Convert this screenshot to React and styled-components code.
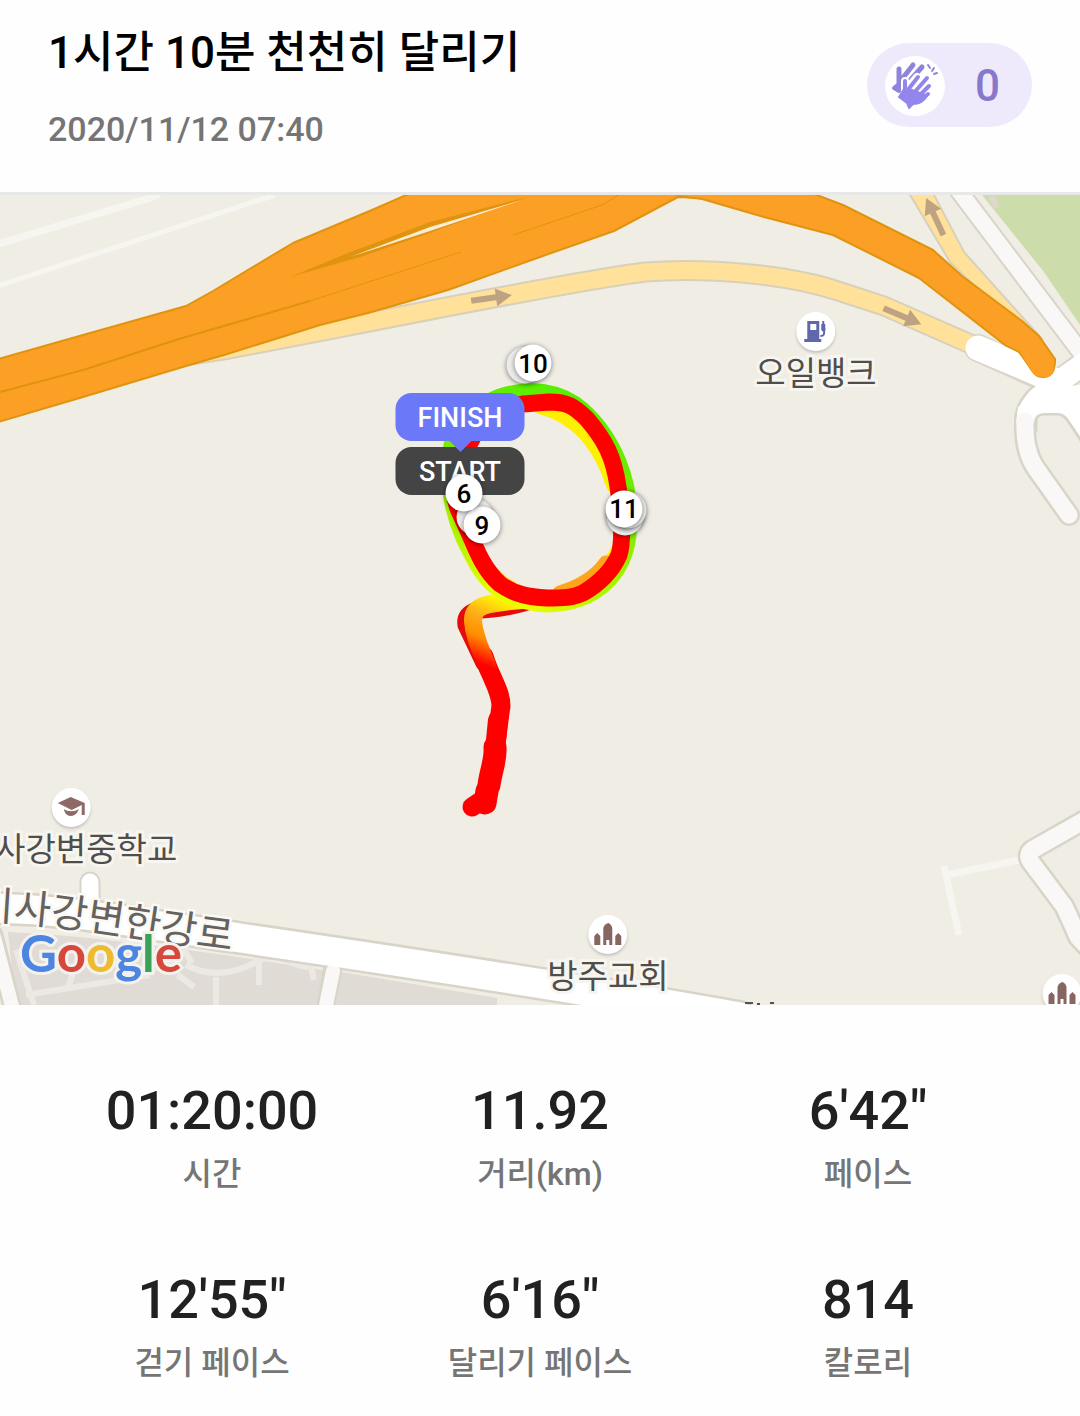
import React from 'react';
import styled, { createGlobalStyle, css } from 'styled-components';

const GlobalStyle = createGlobalStyle`
  * {
    box-sizing: border-box;
  }

  body {
    margin: 0;
    background: #fefefe;
    font-family: Roboto, 'Noto Sans CJK KR', sans-serif;
    font-weight: 500;
  }
`;

const Page = styled.main`
  width: 100%;
  overflow: hidden;
`;

const Header = styled.header`
  display: flex;
  justify-content: space-between;
  align-items: flex-start;
  padding: 24px 48px 42px;
  border-bottom: 3px solid #e8e8e8;
`;

const Title = styled.h1`
  margin: 0;
  font-size: 44px;
  line-height: 58px;
  font-weight: 500;
  color: #000;
`;

const DateText = styled.time`
  display: block;
  margin-top: 26px;
  font-size: 34px;
  line-height: 42px;
  color: #757575;
`;

const ClapButton = styled.button`
  display: flex;
  align-items: center;
  gap: 30px;
  height: 84px;
  margin-top: 19px;
  padding: 2px 32px 0 18px;
  border: 0;
  border-radius: 42px;
  background: #eeeafc;
  color: #8878cc;
  font: inherit;
  font-size: 44px;
  cursor: pointer;
`;

const ClapCircle = styled.span`
  display: flex;
  width: 60px;
  height: 60px;
  border-radius: 50%;
  background: #fff;
`;

const MapBox = styled.section`
  position: relative;
  width: 100%;
  aspect-ratio: 4 / 3;
  overflow: hidden;
  background: #f0ede5;
`;

const MapCanvas = styled.svg`
  display: block;
  width: 100%;
  height: 100%;
`;

const pinned = css`
  position: absolute;
  transform: translate(-50%, -50%);
`;

const Place = styled.div`
  position: absolute;
  transform: translate(-50%, -20px);
  display: flex;
  flex-direction: column;
  align-items: center;
  font-size: 33px;
  line-height: 46px;
  font-weight: 400;
  color: #504d4a;
  white-space: nowrap;
  -webkit-text-stroke: 6px #f7f5f0;
  paint-order: stroke fill;
`;

const PlaceIcon = styled.span`
  display: flex;
  width: 39px;
  height: 39px;
  border-radius: 50%;
  background: #fff;
  box-shadow: 0 2px 3px rgba(0, 0, 0, 0.18);
`;

const KmMarker = styled.span`
  ${pinned}
  display: flex;
  align-items: center;
  justify-content: center;
  width: 37px;
  height: 37px;
  border-radius: 50%;
  background: ${(p) => (p.$behind ? '#ececec' : '#fff')};
  box-shadow: 0 1px 5px rgba(0, 0, 0, 0.5);
  font-size: 26px;
  color: #000;
`;

const Flag = styled.span`
  ${pinned}
  width: 129px;
  height: 48px;
  border-radius: 16px;
  background: ${(p) => p.$color};
  font-size: 27px;
  line-height: 51px;
  text-align: center;
  color: #fff;

  &::after {
    content: '';
    position: absolute;
    top: 47px;
    left: 50%;
    margin-left: -12px;
    border: 12px solid transparent;
    border-bottom: 0;
    border-top-color: ${(p) => p.$color};
  }
`;

const GoogleLogo = styled.a`
  position: absolute;
  left: 20px;
  bottom: 20px;
  font-family: Lato, sans-serif;
  font-size: 51px;
  line-height: 64px;
  font-weight: 700;
  text-decoration: none;
  -webkit-text-stroke: 6px #f4f2ee;
  paint-order: stroke fill;
`;

const Letter = styled.span`
  color: ${(p) => p.$color};
`;

const Stats = styled.dl`
  display: grid;
  grid-template-columns: repeat(3, 1fr);
  row-gap: 63px;
  margin: 0;
  padding: 74px 48px 32px;
`;

const Stat = styled.div`
  display: flex;
  flex-direction: column-reverse;
  align-items: center;
`;

const StatLabel = styled.dt`
  font-size: 32px;
  line-height: 62px;
  color: #757575;
`;

const StatValue = styled.dd`
  margin: 0;
  font-size: 54px;
  line-height: 64px;
  color: #212121;
`;

const stats = [
  { label: '시간', value: '01:20:00' },
  { label: '거리(km)', value: '11.92' },
  { label: '페이스', value: '6\'42"' },
  { label: '걷기 페이스', value: '12\'55"' },
  { label: '달리기 페이스', value: '6\'16"' },
  { label: '칼로리', value: '814' },
];

const googleLetters = [
  ['G', '#4c86e0'],
  ['o', '#d6473c'],
  ['o', '#eebb2e'],
  ['g', '#4c86e0'],
  ['l', '#3aa257'],
  ['e', '#d6473c'],
];

// the map is drawn on a 1080 x 810 canvas
const at = (x, y) => ({ left: `${(x / 1080) * 100}%`, top: `${(y / 810) * 100}%` });

const places = [
  { name: '오일뱅크', x: 816, y: 137, icon: FuelIcon },
  { name: '미사강변중학교', x: 71, y: 613, icon: SchoolIcon },
  { name: '방주교회', x: 608, y: 740, icon: ChurchIcon },
  { x: 1062, y: 799, icon: ChurchIcon },
];

const markers = [
  { x: 525, y: 170 },
  { x: 533, y: 168, km: 10 },
  { x: 625, y: 322 },
  { x: 628, y: 315 },
  { x: 624, y: 314, km: 11 },
  { x: 475, y: 322 },
  { x: 482, y: 330, km: 9 },
  { x: 464, y: 298, km: 6 },
];

const arrows = [
  { x: 491, y: 103, angle: -8 },
  { x: 902, y: 121, angle: 23 },
  { x: 935, y: 22, angle: -115 },
];

function FuelIcon() {
  return (
    <svg viewBox="0 0 39 39" fill="#5f68ab">
      <path fillRule="evenodd" d="M11 9h12v18h2v3H8v-3h3zM14 12v6h6v-6z" />
      <path d="M27 9v4M27 12v5M24 24c4 0 4-1 4-8" fill="none" stroke="#5f68ab" strokeWidth="2" />
      <path d="M25 12h4v6l-2 2-2-2z" />
    </svg>
  );
}

function SchoolIcon() {
  return (
    <svg viewBox="0 0 39 39" fill="#8d6a65">
      <path d="M6 15 19 9l14 6v12h-3V17l-10 5z" />
      <path d="M12 21c4 3 11 3 15 0-1 4-4 7-8 7s-6-3-7-7z" />
    </svg>
  );
}

function ChurchIcon() {
  return (
    <svg viewBox="0 0 39 39" fill="#876560">
      <path d="M6 30v-9l3-3 3 3v9zM27 30v-9l3-3 3 3v9zM15 30V13q1-4 5-5 3 1 4 5v17h-3v-5h-3v5z" />
    </svg>
  );
}

function ClapIcon() {
  return (
    <svg viewBox="0 0 60 60" fill="none" strokeLinecap="round" strokeLinejoin="round">
      <g stroke="#8f84da">
        <path d="M14 13v18M28 9 17 23M37 11 22 28" strokeWidth="5" />
        <path d="M9 32l5-4v7z" strokeWidth="4" fill="#8f84da" />
        <path d="M43 9l2 3M49 12l-2 3M52 17l-3 1" strokeWidth="2" />
      </g>
      <g stroke="#fff">
        <path d="M20 25v15M32 21 21 34M42 22 28 37M44 29 31 42" strokeWidth="8" />
      </g>
      <g stroke="#9286ec" fill="#9286ec">
        <path d="M20 25v15M33 21 22 35M42 22 28 38M44 30 31 43M43 38 33 46" strokeWidth="4" />
        <path d="M19 33 14 41 22 47 24 52 28 48C34 48 39 45 42 40L35 37 24 33z" strokeWidth="2" />
      </g>
    </svg>
  );
}

function RoadMap() {
  return (
    <MapCanvas viewBox="0 0 1080 810" preserveAspectRatio="xMidYMid slice" aria-hidden="true">
      <defs>
        <linearGradient id="tail" gradientUnits="userSpaceOnUse" x1="510" y1="405" x2="484" y2="470">
          <stop offset="0" stopColor="#ff0" />
          <stop offset="0.35" stopColor="#ffae1a" />
          <stop offset="0.65" stopColor="#ff8c00" />
          <stop offset="1" stopColor="#f00" />
        </linearGradient>
        <linearGradient id="pace" gradientUnits="userSpaceOnUse" x1="590" y1="190" x2="500" y2="418">
          <stop offset="0" stopColor="#52f000" />
          <stop offset="0.45" stopColor="#7dea00" />
          <stop offset="0.8" stopColor="#b4f500" />
          <stop offset="1" stopColor="#ff0" />
        </linearGradient>
        <path id="riverRoad" d="M-24 724C40 727 90 735 130 741S200 752 280 761" />
      </defs>

      {/* side streets */}
      <g fill="none" stroke="#f6f5f0">
        <path d="M-5 50 160 0" strokeWidth="7" />
        <path d="M-5 92 275 0" strokeWidth="5" />
        <path d="M944 671l15 69M946 680l74-15" strokeWidth="7" />
      </g>

      {/* park */}
      <path d="M982 0 1019 46 1044 77 1080 130V0z" fill="#ccdcaa" />
      <path d="M988 2l6 12 5-2-4-12z" fill="#dcd8cc" />

      {/* city blocks */}
      <g fill="#e0dbd5">
        <path d="M8 737C80 740 150 750 225 760L323 775 316 810H16z" />
        <path d="M341 777 497 803V810H333z" />
      </g>
      <g fill="none" stroke="#ece9e4" strokeWidth="6">
        <path d="M16 755 34 810M26 800 150 780M82 754 68 792M150 776 185 757 192 768M178 780 194 792M186 770C214 785 240 776 258 766S290 770 308 772M216 782V810M259 768V790M308 760 314 785" />
      </g>

      {/* local roads: casing then fill */}
      <g fill="none" strokeLinecap="round" strokeLinejoin="round">
        <g stroke="#d8d4c8">
          <path d="M90 687V720" strokeWidth="21" />
          <path d="M-6 740 13 815M333 772 324 820" strokeWidth="19" />
          <path d="M-20 713C60 713 110 724 240 743S560 790 740 822" strokeWidth="34" />
          <path d="M1090 622 1032 655Q1026 660 1031 667L1064 711Q1072 728 1078 742L1095 760" strokeWidth="22" />
          <path d="M953-12 1095 176" strokeWidth="20" />
          <path d="M978 153 1056 188" strokeWidth="28" />
          <path d="M1056 188Q1024 205 1025 228" strokeWidth="22" />
          <path d="M1054 190 1110 150M1052 192 1100 260" strokeWidth="26" />
        </g>
        <g stroke="#fff">
          <path d="M90 687V724" strokeWidth="17" />
          <path d="M-6 742 13 815M333 776 324 820" strokeWidth="14" stroke="#faf8f6" />
          <path d="M-20 713C60 713 110 724 240 743S560 790 740 822" strokeWidth="29" />
          <g stroke="#faf8f6">
            <path d="M1090 622 1032 655Q1026 660 1031 667L1064 711Q1072 728 1078 742L1095 760" strokeWidth="17" />
            <path d="M953-12 1095 176" strokeWidth="16" />
          </g>
          <path d="M1056 188Q1024 205 1025 228" strokeWidth="17" />
          <path d="M1054 190 1110 150M1052 192 1100 260" strokeWidth="22" />
        </g>
      </g>
      <path d="M1035 226Q1036 219 1045 219H1058Q1063 219 1068 226L1090 260V290H1050L1036 250z" fill="#f0ede5" />
      <g fill="none" strokeLinecap="round">
        <path d="M1036 236V226Q1036 219 1045 219H1058Q1063 219 1068 226L1084 250" stroke="#d8d4c8" strokeWidth="3" />
        <path d="M1025 228Q1024 255 1035 272L1069 320" stroke="#d8d4c8" strokeWidth="22" />
      </g>
      <path d="M1040 193 1018 212 1016 228H1034Q1034 218 1045 218H1058Q1065 218 1070 226L1080 240V190z" fill="#fff" />
      <path d="M1025 226Q1024 255 1035 272L1069 320" fill="none" stroke="#faf8f6" strokeWidth="17" strokeLinecap="round" />

      {/* ramps */}
      <path
        d="M186 161 224 155 334 134C440 113 590 84 645 77 710 72 790 80 838 96L884 111 975 151"
        fill="none"
        stroke="#d9d0bb"
        strokeWidth="21"
      />
      <path
        d="M186 161 224 155 334 134C440 113 590 84 645 77 710 72 790 80 838 96L884 111 975 151"
        fill="none"
        stroke="#ffe199"
        strokeWidth="17"
      />
      <path d="M909-2 950 67 1010 125 1043 145 964 57 933-2z" fill="#ffe199" stroke="#d9d0bb" strokeWidth="2" />
      <path d="M978 153 1056 186" stroke="#fff" strokeWidth="25" strokeLinecap="round" />

      {/* expressway */}
      <g fill="#fc9f25" stroke="#e0930f" strokeWidth="2" strokeLinejoin="round">
        <path d="M-5 165 83 140 186 111 213 96 293 48 372 15 413-3H720L702 3 678 2 614 36 540 62 448 95 368 118 320 130 224 160 186 171 83 202-5 228z" />
        <path d="M670-10 678 1 702 4 764 22 833 40 919 83 1005 150 1019 157C1030 170 1032 182 1043 182S1055 172 1055 164L1039 141 1022 126 962 81 933 55 843 10 809-3V-10z" />
      </g>
      <path d="M682-4 702 2 764 20 800 20 760-4z" fill="#fc9f25" />
      <path d="M1005 149 1019 156C1030 170 1030 182 1043 182S1054 174 1053 166L1030 140z" fill="#fc9f25" />
      <path d="M290 82 348 58 430 27 528 2 427 39 360 62z" fill="#e0930f" />
      <path d="M350 62 430 32 522 5 427 37z" fill="#f8ecd3" />
      <path d="M0 197 83 175 179 144 310 106 461 57" fill="none" stroke="#e0930f" strokeWidth="1" />
      <path d="M0 197 83 175 179 144 310 106" fill="none" stroke="#e0930f" strokeWidth="2" />
      <path d="M513 40 540 31 602 10 622-2" fill="none" stroke="#e0930f" strokeWidth="1" />

      {arrows.map((a) => (
        <path
          key={a.x}
          d="M-20-3H5V-9L21 0 5 9V3H-20z"
          transform={`translate(${a.x} ${a.y}) rotate(${a.angle})`}
          fill="#bda384"
        />
      ))}

      <g fill="none" strokeLinecap="round" strokeLinejoin="round">
        {/* run to the track and back */}
        <path d="M540 403Q505 415 478 415 464 418 466 430L484 468" stroke="#e60a0a" strokeWidth="17" />
        <path d="M484 461C490 482 501 495 501 511 499 525 498 532 497 542" stroke="#f00" strokeWidth="19" />
        <path d="M498 525 496 545 493 570" stroke="#f00" strokeWidth="20" />
        <path d="M495 552C496 565 491 575 489 590" stroke="#f00" strokeWidth="23" />
        <path d="M488 588 487 602 472 612" stroke="#f00" strokeWidth="19" />
        <path d="M487 596 485 608" stroke="#f00" strokeWidth="23" />
        <path d="M530 404C500 408 472 406 473 426 474 442 482 457 488 474" stroke="url(#tail)" strokeWidth="18" />

        {/* laps */}
        <path
          d="M452 250C446 280 450 310 464 343 480 375 490 404 545 409 600 408 624 375 628 340 634 285 610 240 582 215 560 196 530 192 500 202 475 212 458 230 452 250z"
          stroke="url(#pace)"
          strokeWidth="17"
        />
        <path
          d="M540 211C575 220 600 245 614 290M622 345C618 365 600 385 565 398M540 404C510 400 485 380 472 348"
          stroke="#ffef00"
          strokeWidth="16"
        />
        <path d="M606 368Q592 388 560 398" stroke="#ffa51c" strokeWidth="15" />
        <path
          d="M473 242C458 270 448 295 460 318L470 340C477 357 485 376 500 389 515 400 530 402 547 403 562 403 573 403 583 398 600 388 612 376 619 360 624 345 621 310 618 292 614 262 605 245 587 224 574 211 567 207 549 207L523 209 500 214"
          stroke="#f00"
          strokeWidth="17"
        />
      </g>

      <text fontSize="40" fontWeight="400" fill="#66625e" stroke="#faf9f6" strokeWidth="5" paintOrder="stroke">
        <textPath href="#riverRoad">미사강변한강로</textPath>
      </text>
      <path d="M745 808h8M757 809h3M770 808h4" stroke="#55524f" strokeWidth="2" />
    </MapCanvas>
  );
}

function App() {
  return (
    <>
      <GlobalStyle />
      <Page>
        <Header>
          <div>
            <Title>1시간 10분 천천히 달리기</Title>
            <DateText dateTime="2020-11-12T07:40">2020/11/12 07:40</DateText>
          </div>
          <ClapButton type="button">
            <ClapCircle>
              <ClapIcon />
            </ClapCircle>
            0
          </ClapButton>
        </Header>

        <MapBox>
          <RoadMap />
          {places.map(({ name, x, y, icon: Icon }) => (
            <Place key={x} style={at(x, y)}>
              <PlaceIcon>
                <Icon />
              </PlaceIcon>
              {name}
            </Place>
          ))}
          <Flag $color="#444" style={at(460, 276)}>START</Flag>
          <Flag $color="#6b79f8" style={at(460, 222)}>FINISH</Flag>
          {markers.map((m) => (
            <KmMarker key={`${m.x}-${m.y}`} $behind={!m.km} style={at(m.x, m.y)}>
              {m.km}
            </KmMarker>
          ))}
          <GoogleLogo href="#google" aria-label="Google">
            {googleLetters.map(([char, color], index) => (
              <Letter key={index} $color={color}>{char}</Letter>
            ))}
          </GoogleLogo>
        </MapBox>

        <Stats>
          {stats.map((stat) => (
            <Stat key={stat.label}>
              <StatLabel>{stat.label}</StatLabel>
              <StatValue>{stat.value}</StatValue>
            </Stat>
          ))}
        </Stats>
      </Page>
    </>
  );
}

export default App;
